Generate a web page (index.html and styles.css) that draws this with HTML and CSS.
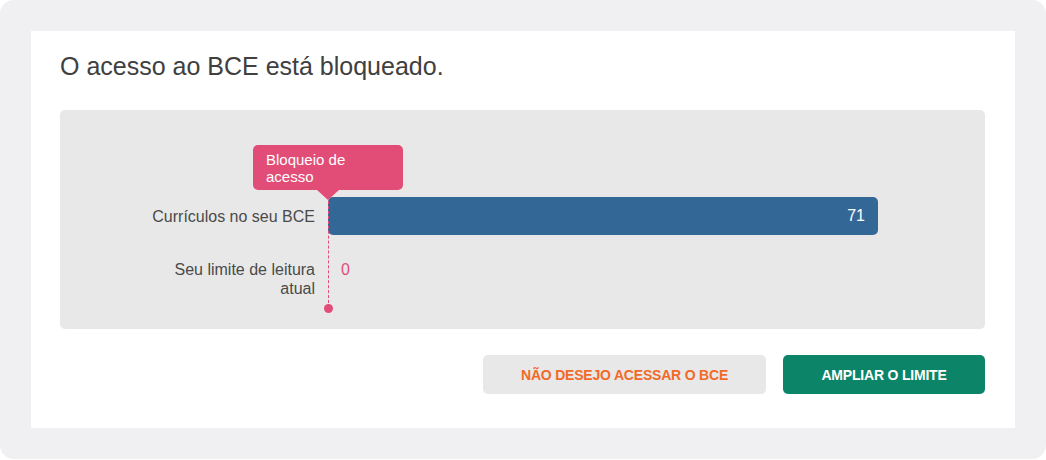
FILE: index.html
```html
<!DOCTYPE html>
<html>
<head>
	<title>Acesso ao BCE</title>
	<meta http-equiv="content-type" content="text/html; charset=utf-8" />
	<link rel="stylesheet" href="styles.css">
</head>
<body>
	<div class="frame">
		<h1 class="title">O acesso ao BCE está bloqueado.</h1>

		<div class="chart">
			<div class="tip">Bloqueio de<br>acesso</div>
			<div class="marker"></div>

			<div class="row">
				<div class="label">Currículos no seu BCE</div>
				<div class="bar" style="width:550px;"><span>71</span></div>
			</div>

			<div class="row row-limit">
				<div class="label">Seu limite de leitura<br>atual</div>
				<div class="value">0</div>
			</div>
		</div>

		<div class="actions">
			<button class="btn btn-grey">NÃO DESEJO ACESSAR O BCE</button>
			<button class="btn btn-green">AMPLIAR O LIMITE</button>
		</div>
	</div>
</body>
</html>
```

FILE: styles.css
```css
body {
	margin:0;
	background:#fff;
	font-family:"Liberation Sans", Arial, sans-serif;
	color:#444;
}

.frame {
	width:925px;
	height:397px;
	border:31px solid #f0f0f2;
	border-radius:14px;
	background:#fff;
	padding:0 30px 0 29px;
	overflow:hidden;
}

.title {
	font-size:25px;
	font-weight:normal;
	color:#404040;
	margin:21px 0 29px 0;
	line-height:29px;
}

.chart {
	position:relative;
	background:#e8e8e8;
	border-radius:5px;
	padding:87px 0 31px 0;
}

.row {
	display:flex;
	align-items:center;
	gap:13px;
}

.label {
	width:255px;
	text-align:right;
	font-size:16px;
	line-height:19px;
	color:#4a4a4a;
}

.bar {
	height:38px;
	background:#336796;
	border-radius:5px;
	display:flex;
	align-items:center;
	justify-content:flex-end;
	color:#fff;
	font-size:16px;
}

.bar span {
	padding-right:13px;
}

.row-limit {
	margin-top:25px;
	align-items:flex-start;
}

.value {
	color:#e04e78;
	font-size:16px;
	line-height:19px;
	padding-left:13px;
}

.tip {
	position:absolute;
	left:193px;
	top:35px;
	width:137px;
	height:39px;
	padding:6px 0 0 13px;
	background:#e14d77;
	border-radius:5px;
	color:#fff;
	font-size:15px;
	line-height:17px;
}

.tip:after {
	content:"";
	position:absolute;
	left:64px;
	top:45px;
	border-left:11px solid transparent;
	border-right:11px solid transparent;
	border-top:10px solid #e14d77;
}

.marker {
	position:absolute;
	left:268px;
	top:91px;
	height:107px;
	border-left:1px dashed #e14d77;
}

.marker:after {
	content:"";
	position:absolute;
	left:-5px;
	bottom:-5px;
	width:9px;
	height:9px;
	border-radius:50%;
	background:#e14d77;
}

.actions {
	display:flex;
	justify-content:flex-end;
	gap:17px;
	margin-top:26px;
}

.btn {
	height:39px;
	border:0;
	border-radius:5px;
	font-family:"Liberation Sans", Arial, sans-serif;
	font-size:14px;
	font-weight:bold;
	letter-spacing:-0.2px;
}

.btn-grey {
	width:283px;
	background:#e8e8e8;
	color:#f26a27;
}

.btn-green {
	width:202px;
	background:#0c8467;
	color:#fff;
}
```
